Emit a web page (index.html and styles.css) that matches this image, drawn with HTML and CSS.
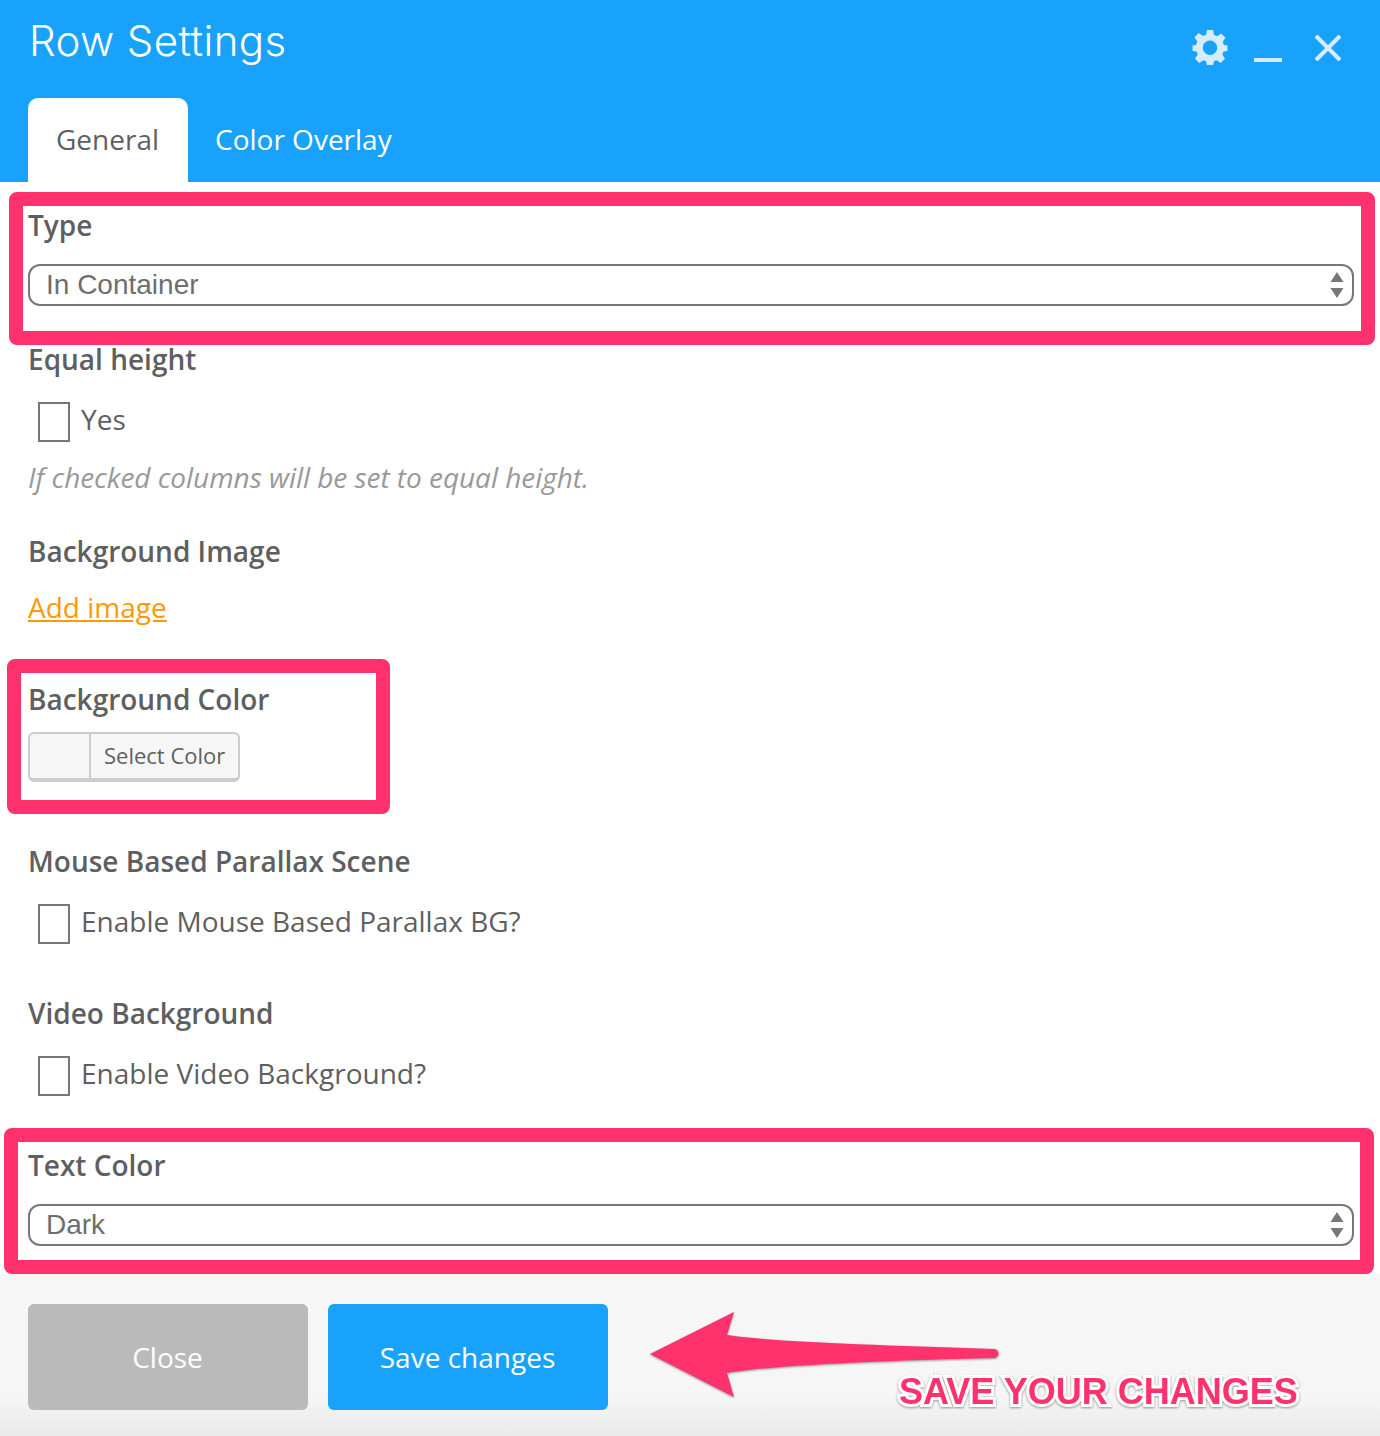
FILE: index.html
```html
<!DOCTYPE html>
<html lang="en">
<head>
    <meta charset="UTF-8">
    <title>Row Settings</title>
    <link rel="stylesheet" href="styles.css">
</head>
<body>
    <div class="modal">
        <div class="header">
            <div class="title-row">
                <h1>Row Settings</h1>
                <div class="actions">
                    <svg class="gear" width="36" height="36" viewBox="0 0 36 36">
                        <path fill-rule="evenodd" d="M15 1h6l1 5 3 1.300 4.300-2.800 4.200 4.200-2.800 4.300L32 16l3.500 .5v5.500l-4 .5-1.200 3 2.700 4.300-4.200 4.200-4.300-2.800-2.500 1-1 4h-6l-1-4-2.500-1-4.300 2.800-4.200-4.200 2.700-4.300-1.200-3-4-.5v-5.500l3.500-.5 1.300-3.500-2.800-4.300 4.200-4.200 4.300 2.800L14 6z M18 11.500a7.200 7.200 0 1 0 .01 0z"/>
                    </svg>
                    <span class="minimize"></span>
                    <svg class="close-x" width="30" height="28" viewBox="0 0 30 28">
                        <path d="M3 2l24 24M27 2L3 26"/>
                    </svg>
                </div>
            </div>
            <div class="tabs">
                <a class="tab active">General</a>
                <a class="tab">Color Overlay</a>
            </div>
        </div>

        <div class="body">
            <div class="field gap-34">
                <label class="label mb-18">Type</label>
                <div class="select">
                    <span>In Container</span>
                    <svg width="14" height="26" viewBox="0 0 14 26"><path d="M7 0l6.500 10H.5zM7 26L.5 16h13z"/></svg>
                </div>
            </div>

            <div class="field gap-34">
                <label class="label mb-22">Equal height</label>
                <div class="check-row"><span class="checkbox"></span><span>Yes</span></div>
                <div class="help">If checked columns will be set to equal height.</div>
            </div>

            <div class="field gap-52">
                <label class="label mb-16">Background Image</label>
                <a class="link">Add image</a>
            </div>

            <div class="field gap-60">
                <label class="label mb-12">Background Color</label>
                <div class="color-btn"><span class="swatch"></span><span class="color-text">Select Color</span></div>
            </div>

            <div class="field gap-50">
                <label class="label mb-22">Mouse Based Parallax Scene</label>
                <div class="check-row"><span class="checkbox"></span><span>Enable Mouse Based Parallax BG?</span></div>
            </div>

            <div class="field gap-50">
                <label class="label mb-22">Video Background</label>
                <div class="check-row"><span class="checkbox"></span><span>Enable Video Background?</span></div>
            </div>

            <div class="field gap-28">
                <label class="label mb-18">Text Color</label>
                <div class="select">
                    <span>Dark</span>
                    <svg width="14" height="26" viewBox="0 0 14 26"><path d="M7 0l6.500 10H.5zM7 26L.5 16h13z"/></svg>
                </div>
            </div>
        </div>

        <div class="footer">
            <button class="btn btn-grey">Close</button>
            <button class="btn btn-blue">Save changes</button>
        </div>
    </div>

    <!-- annotations drawn over the screenshot -->
    <div class="mark mark-type"></div>
    <div class="mark mark-color"></div>
    <div class="mark mark-text"></div>
    <svg class="arrow" width="352" height="86" viewBox="0 0 352 86">
        <path d="M0 42L84 0 77 23C130 31 260 34 344 37a4.500 4.500 0 0 1 0 9C260 48 130 52 77 61l7 24z"/>
    </svg>
    <div class="save-note">SAVE YOUR CHANGES</div>
</body>
</html>
```

FILE: styles.css
```css
:root {
    --blue: #18a2fc;
    --pink: #ff326e;
    --text: #5f5f5f;
    --line: #777777;
}

* {
    box-sizing: border-box;
}

body {
    margin: 0;
    background: #ffffff;
    color: var(--text);
    font-family: "Open Sans", sans-serif;
    font-size: 28px;
}

.modal {
    position: relative;
    width: 1380px;
    height: 1436px;
    overflow: hidden;
}

.header {
    height: 182px;
    background: var(--blue);
    padding: 0 28px;
}

.title-row {
    height: 98px;
    display: flex;
    justify-content: space-between;
}

h1 {
    margin: 17px 0 0 1px;
    font-family: Inter, sans-serif;
    font-size: 42px;
    line-height: 48px;
    font-weight: 300;
    letter-spacing: 0.4px;
    color: #ffffff;
}

.actions {
    display: flex;
    align-items: flex-start;
    padding-right: 9px;
}

.gear {
    margin-top: 29px;
    fill: #d5ecff;
}

.minimize {
    width: 28px;
    height: 4px;
    margin: 58px 0 0 26px;
    background: #d5ecff;
}

.close-x {
    margin: 34px 0 0 31px;
    fill: none;
    stroke: #d5ecff;
    stroke-width: 4;
}

.tabs {
    display: flex;
    height: 84px;
}

.tab {
    padding: 0 27px;
    line-height: 82px;
    color: #ffffff;
    white-space: nowrap;
}

.tab.active {
    width: 160px;
    background: #ffffff;
    color: var(--text);
    border-radius: 10px 10px 0 0;
    text-align: center;
    padding: 0 1px 0 0;
}

.body {
    padding: 24px 26px 0 28px;
}

.gap-28 { margin-bottom: 28px; }
.gap-34 { margin-bottom: 34px; }
.gap-50 { margin-bottom: 50px; }
.gap-52 { margin-bottom: 52px; }
.gap-60 { margin-bottom: 60px; }

.label {
    display: block;
    height: 40px;
    line-height: 38px;
    font-weight: 600;
}

.mb-12 { margin-bottom: 12px; }
.mb-16 { margin-bottom: 16px; }
.mb-18 { margin-bottom: 18px; }
.mb-22 { margin-bottom: 22px; }

.select {
    height: 42px;
    padding: 0 8px 0 16px;
    border: 2px solid var(--line);
    border-radius: 12px;
    display: flex;
    align-items: center;
    justify-content: space-between;
    font-family: "Liberation Sans", sans-serif;
    color: #6e6e6e;
}

.select span {
    margin-top: -1px;
}

.select svg {
    fill: var(--line);
}

.check-row {
    display: flex;
    align-items: flex-start;
    gap: 11px;
    height: 40px;
    padding-left: 10px;
    line-height: 34px;
}

.checkbox {
    width: 32px;
    height: 40px;
    border: 2px solid var(--line);
}

.help {
    margin-top: 16px;
    height: 40px;
    line-height: 38px;
    font-style: italic;
    letter-spacing: -0.04px;
    color: #999999;
}

.link {
    display: block;
    height: 40px;
    line-height: 38px;
    color: #ff9900;
    text-decoration: underline;
}

.color-btn {
    display: flex;
    width: 212px;
    height: 50px;
    background: #f6f6f6;
    border: 2px solid #cccccc;
    border-bottom-width: 4px;
    border-radius: 6px;
}

.swatch {
    width: 61px;
    border-right: 2px solid #cccccc;
}

.color-text {
    padding-left: 13px;
    font-size: 22px;
    line-height: 42px;
    white-space: nowrap;
}

.footer {
    height: 162px;
    padding: 30px 28px 0;
    display: flex;
    gap: 20px;
    background: linear-gradient(#f6f6f6 75%, #e9e9e9);
}

.btn {
    width: 280px;
    height: 106px;
    padding: 0 1px 0 0;
    border: none;
    border-radius: 6px;
    color: #ffffff;
    font-family: "Open Sans", sans-serif;
    font-size: 28px;
}

.btn-grey {
    background: #bababa;
}

.btn-blue {
    background: var(--blue);
}

.mark {
    position: absolute;
    border: 14px solid var(--pink);
    border-radius: 8px;
}

.mark-type {
    left: 9px;
    top: 192px;
    width: 1366px;
    height: 153px;
}

.mark-color {
    left: 7px;
    top: 659px;
    width: 383px;
    height: 155px;
}

.mark-text {
    left: 4px;
    top: 1128px;
    width: 1370px;
    height: 146px;
}

.arrow {
    position: absolute;
    left: 650px;
    top: 1312px;
    fill: var(--pink);
    filter: drop-shadow(0 1px 1px rgba(0, 0, 0, 0.4));
}

.save-note {
    position: absolute;
    left: 899px;
    top: 1368px;
    font-family: "Liberation Sans", sans-serif;
    font-size: 36px;
    line-height: 48px;
    font-weight: 700;
    color: var(--pink);
    white-space: nowrap;
    -webkit-text-stroke: 6px #ffffff;
    paint-order: stroke fill;
    filter: drop-shadow(0 1px 1px rgba(0, 0, 0, 0.4));
}
```
